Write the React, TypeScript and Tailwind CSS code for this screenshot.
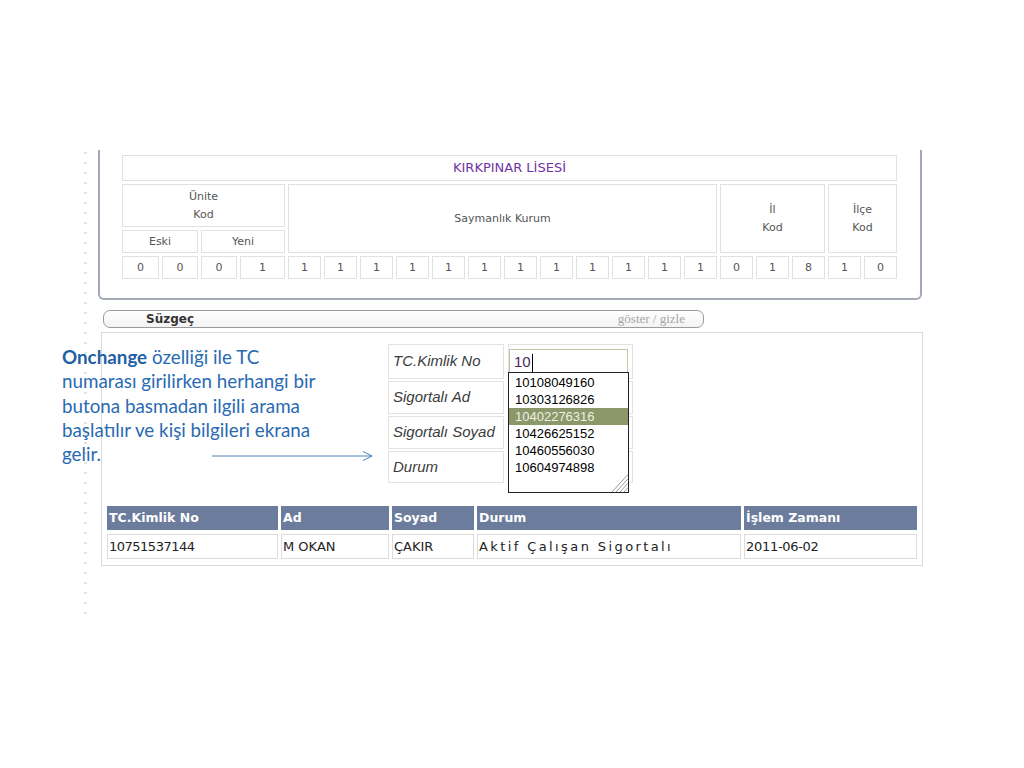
import React from "react";

const UNITE = ["0", "0", "0", "1"];
const SAYMANLIK = Array.from({ length: 12 }, () => "1");
const IL = ["0", "1", "8"];
const ILCE = ["1", "0"];

const SUGGESTIONS = [
  "10108049160",
  "10303126826",
  "10402276316",
  "10426625152",
  "10460556030",
  "10604974898",
];

const HEADERS = ["TC.Kimlik No", "Ad", "Soyad", "Durum", "İşlem Zamanı"];

const box = "border border-[#e1e1e1] bg-white flex items-center justify-center leading-[14px]";
const cell = `${box} text-[11px] text-[#555]`;

function KurumTable() {
  const digits = [...UNITE, ...SAYMANLIK, ...IL, ...ILCE];
  return (
    <div
      className="grid grid-cols-[37px_36px_36px_45px_repeat(17,33px)] grid-rows-[26px_43px_23px_23px] gap-[3px]"
      style={{ fontFamily: '"DejaVu Sans", Verdana, sans-serif' }}
    >
      <div className={`${box} col-span-21 text-[13px] text-[#6f35a5]`}>KIRKPINAR LİSESİ</div>
      <div className={`${cell} col-span-4 flex-col`}>
        <span>Ünite</span>
        <span className="mt-[4px]">Kod</span>
      </div>
      <div className={`${cell} col-span-12 row-span-2`}>Saymanlık Kurum</div>
      <div className={`${cell} col-span-3 row-span-2 flex-col`}>
        <span>İl</span>
        <span className="mt-[4px]">Kod</span>
      </div>
      <div className={`${cell} col-span-2 row-span-2 flex-col`}>
        <span>İlçe</span>
        <span className="mt-[4px]">Kod</span>
      </div>
      <div className={`${cell} col-span-2`}>Eski</div>
      <div className={`${cell} col-span-2`}>Yeni</div>
      {digits.map((d, i) => (
        <div key={i} className={cell}>
          {d}
        </div>
      ))}
    </div>
  );
}

function ResizeGrip() {
  return (
    <svg className="absolute bottom-0 right-0" width="16" height="18" viewBox="0 0 16 18">
      {[0, 4, 8, 12].map((o) => (
        <line key={o} x1={o} y1="18" x2="16" y2={18 - (16 - o) * 1.1} stroke="#9a9a9a" strokeWidth="1" />
      ))}
    </svg>
  );
}

function SearchForm() {
  const label =
    "border border-[#e2e2e2] flex items-center pl-[4px] italic text-[15px] text-[#3c3c3c]";
  return (
    <div
      className="grid grid-cols-[116px_125px] grid-rows-[35px_33px_33px_32px] gap-x-[4px] gap-y-[2px]"
      style={{ fontFamily: '"Liberation Sans", Arial, sans-serif' }}
    >
      <div className={label}>TC.Kimlik No</div>
      <div className="relative border border-[#e2e2e2]">
        <div className="mt-[4px] flex h-[27px] w-[119px] items-center border border-[#c6c6a6] bg-white pl-[4px] text-[15px] text-[#4a2a60]">
          10
          <span className="ml-[1px] inline-block h-[18px] w-[1px] bg-black" />
        </div>
        <div className="absolute left-[-1px] top-[27px] z-10 h-[121px] w-[121px] border border-[#222] bg-white pt-[1px]">
          {SUGGESTIONS.map((s, i) => (
            <div
              key={s}
              className={`h-[17px] pl-[6px] text-[13px] leading-[17px] ${
                i === 2 ? "bg-[#8d986a] text-[#eef0e2]" : "text-black"
              }`}
            >
              {s}
            </div>
          ))}
          <ResizeGrip />
        </div>
      </div>
      <div className={label}>Sigortalı Ad</div>
      <div className="border border-[#e2e2e2]" />
      <div className={label}>Sigortalı Soyad</div>
      <div className="border border-[#e2e2e2]" />
      <div className={label}>Durum</div>
      <div className="border border-[#e2e2e2]" />
    </div>
  );
}

function ResultTable() {
  const td = "flex items-center border border-[#dcdcdc] pl-[1px] text-[13px] text-[#222]";
  return (
    <div
      className="grid grid-cols-[171px_108px_82px_264px_173px] grid-rows-[24px_25px] gap-x-[3px] gap-y-[4px]"
      style={{ fontFamily: '"DejaVu Sans", Verdana, sans-serif' }}
    >
      {HEADERS.map((h) => (
        <div key={h} className="flex items-center bg-[#6c7c9c] pl-[2px] text-[12.5px] font-bold text-white">
          {h}
        </div>
      ))}
      <div className={`${td} tracking-[-0.5px]`}>10751537144</div>
      <div className={td}>M OKAN</div>
      <div className={td}>ÇAKIR</div>
      <div className={`${td} tracking-[2.4px]`}>Aktif Çalışan Sigortalı</div>
      <div className={`${td} tracking-[-0.3px]`}>2011-06-02</div>
    </div>
  );
}

export default function App() {
  return (
    <div className="relative h-[768px] w-[1024px] overflow-hidden bg-white">
      <div className="flex pt-[150px]">
        <svg className="ml-[84px] shrink-0" width="3" height="470">
          <line x1="1.5" y1="2" x2="1.5" y2="470" stroke="#e0e0e0" strokeWidth="2.5" strokeDasharray="2 8" />
        </svg>
        <div className="ml-[11px] flex flex-col">
          <div className="w-[824px] rounded-b-[6px] border-x-2 border-b-2 border-[#a3aab6] pb-[19px] pl-[22px] pt-[5px]">
            <KurumTable />
          </div>

          <div className="ml-[5px] mt-[10px] flex h-[18px] w-[601px] items-center justify-between rounded-[7px] border border-[#9a9a9a] bg-gradient-to-b from-white to-[#f3f3f3] pl-[42px] pr-[18px]">
            <span
              className="text-[12px] font-bold text-[#333]"
              style={{ fontFamily: '"DejaVu Sans", Verdana, sans-serif' }}
            >
              Süzgeç
            </span>
            <span
              className="text-[13px] text-[#a6a6a6]"
              style={{ fontFamily: '"Liberation Serif", "DejaVu Serif", serif' }}
            >
              göster / gizle
            </span>
          </div>

          <div className="ml-[3px] mt-[4px] w-[822px] border border-[#dadada] pb-[6px] pl-[5px] pt-[11px]">
            <div className="ml-[281px]">
              <SearchForm />
            </div>
            <div className="mt-[23px]">
              <ResultTable />
            </div>
          </div>
        </div>
      </div>

      <div
        className="absolute left-[62px] top-[345px] text-[18.8px] leading-[24.3px] text-[#2a6ab2]"
        style={{ fontFamily: 'Lato, "Open Sans", sans-serif' }}
      >
        <div>
          <span className="font-bold text-[#1f5fa6]">Onchange</span> özelliği ile TC
        </div>
        <div>numarası girilirken herhangi bir</div>
        <div>butona basmadan ilgili arama</div>
        <div>başlatılır ve kişi bilgileri ekrana</div>
        <div>gelir.</div>
      </div>
      <svg className="absolute left-[212px] top-[450px]" width="164" height="12" viewBox="0 0 164 12">
        <line x1="0" y1="6" x2="160" y2="6" stroke="#4a7ebb" strokeWidth="1" />
        <polyline points="151,1.5 160,6 151,10.5" fill="none" stroke="#4a7ebb" strokeWidth="1" />
      </svg>
    </div>
  );
}
